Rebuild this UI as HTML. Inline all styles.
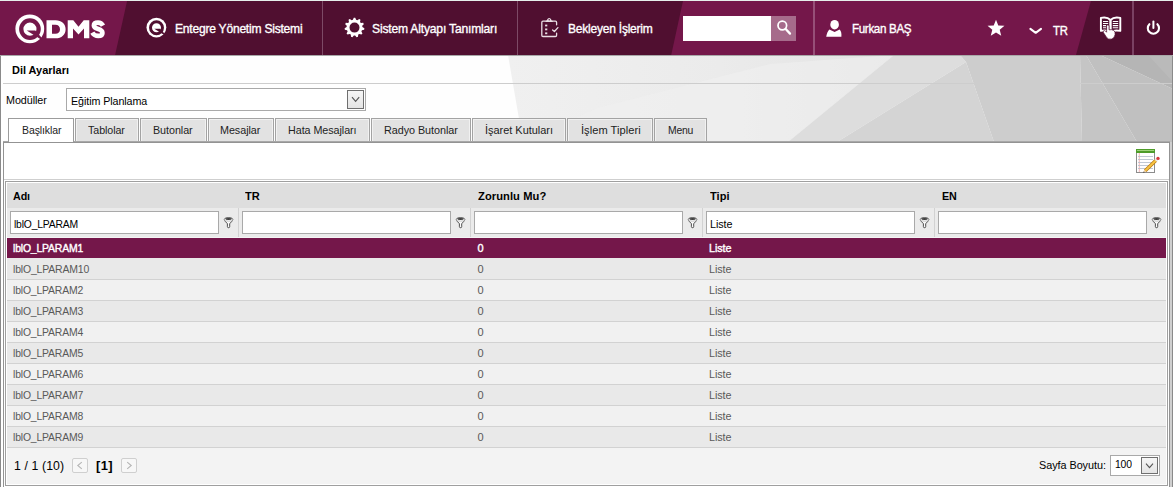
<!DOCTYPE html>
<html lang="tr">
<head>
<meta charset="utf-8">
<title>Dil Ayarları</title>
<style>
html,body{margin:0;padding:0;}
body{width:1173px;height:487px;position:relative;overflow:hidden;background:#fff;font-family:"Liberation Sans",sans-serif;}
.a{position:absolute;}
.t{position:absolute;white-space:nowrap;transform-origin:0 50%;font-family:"Liberation Sans",sans-serif;}
#bg{left:0;top:0;}
.tab{position:absolute;top:118px;height:23px;box-sizing:border-box;border:1px solid #a3a3a3;border-bottom:none;background:#e2e2e2;box-shadow:inset 1px 1px 0 #f1f1f1,inset -1px 0 0 #f1f1f1;}
.tab.on{background:#fff;height:24px;box-shadow:none;border-color:#9b9b9b;}
.inp{position:absolute;top:211px;width:209px;height:23px;box-sizing:border-box;border:1px solid #a9a9a9;background:#fff;}
.row{position:absolute;left:7px;width:1159px;height:21px;box-sizing:border-box;border-bottom:1px solid #d2d2d2;}
.pb{position:absolute;top:458px;width:16px;height:15px;box-sizing:border-box;border:1px solid #cfcfcf;border-radius:2px;background:#f7f7f7;}
</style>
</head>
<body>
<!-- page background with facets -->
<svg id="bg" class="a" width="1173" height="487" viewBox="0 0 1173 487">
  <defs>
    <linearGradient id="g1" x1="508" x2="894" y1="0" y2="0" gradientUnits="userSpaceOnUse">
      <stop offset="0" stop-color="#f0f0f0"/>
      <stop offset="0.55" stop-color="#ebebeb"/>
      <stop offset="1" stop-color="#e3e3e3"/>
    </linearGradient>
  </defs>
  <rect x="0" y="55" width="1173" height="432" fill="#fefefe"/>
  <polygon points="508,55 894,55 788,142 523,142" fill="url(#g1)"/>
  <polygon points="523,142 598,108 770,64 894,55 788,142" fill="#f1f1f1" opacity="0.55"/>
  <polygon points="894,55 960,55 966,62 837,142 788,142" fill="#dddddd"/>
  <polygon points="966,62 994,142 837,142" fill="#d4d4d4"/>
  <polygon points="960,55 1080,55 1082,142 994,142 966,62" fill="#cdcdcd"/>
  <polygon points="1080,55 1086,55 1137,142 1082,142" fill="#c5c5c5"/>
  <polygon points="1086,55 1100,55 1173,89 1173,142 1137,142" fill="#c0c0c0"/>
  <polygon points="1100,55 1173,55 1173,89" fill="#b5b5b5"/>
  <polygon points="1148,55 1173,55 1173,82" fill="#bababa"/>
  <rect x="0" y="142" width="1173" height="345" fill="#cfcfcf"/>
  <rect x="0" y="83" width="1173" height="1" fill="#cdcdcd"/>
  <rect x="0" y="55" width="1" height="432" fill="#8a8a8a"/>
  <rect x="1" y="55" width="2" height="432" fill="#ffffff"/>
  <rect x="1172" y="55" width="1" height="432" fill="#8a8a8a"/>
</svg>

<!-- header -->
<svg class="a" style="left:0;top:0" width="1173" height="56" viewBox="0 0 1173 56">
  <rect x="0" y="0" width="1173" height="55" fill="#74174a"/>
  <polygon points="127.3,0 683.2,0 671.2,55 115.1,55" fill="#500f30"/>
  <polygon points="1091.2,0 1173,0 1173,55 1076,55" fill="#500f30"/>
  <rect x="0" y="0" width="1173" height="1" fill="#e6efeb"/>
  <rect x="0" y="55" width="1173" height="1" fill="#a8a8a8"/>
  <!-- separators -->
  <rect x="322" y="1" width="1" height="54" fill="#7d4a66"/>
  <rect x="517" y="1" width="1" height="54" fill="#7d4a66"/>
  <rect x="813" y="1" width="2" height="54" fill="#974f78"/>
  <rect x="1132" y="1" width="2" height="54" fill="#7a4162"/>
  <!-- big Q logo -->
  <g>
    <circle cx="29.8" cy="28.8" r="14.4" fill="#fff"/>
    <circle cx="29.95" cy="29.1" r="8.7" fill="none" stroke="#74174a" stroke-width="4.3"/>
    <polygon points="26.7,30.6 35.3,30.6 43,39.2 43,40.8" fill="#74174a"/>
  </g>
  <!-- DMS -->
  <path fill="#fff" fill-rule="evenodd" d="M46.5 20.2 H55.6 C61.6 20.2 65.6 23.7 65.6 29.25 C65.6 34.8 61.6 38.3 55.6 38.3 H46.5 Z M52 24.7 V33.8 H55.4 C58.3 33.8 60 32.1 60 29.25 C60 26.4 58.3 24.7 55.4 24.7 Z"/>
  <path fill="#fff" d="M67.7 38.3 V20.2 H73.3 L78.5 26.8 L83.7 20.2 H89.3 V38.3 H84 V28.4 L78.5 34.6 L73 28.4 V38.3 Z"/>
  <path fill="none" stroke="#fff" stroke-width="4.7" d="M103 25.6 C101.8 23.4 100.2 22.55 98 22.55 C95.4 22.55 93.9 23.7 93.9 25.5 C93.9 27.5 95.6 28.3 98.2 29.1 C101 29.9 102.4 31 102.4 33 C102.4 34.9 100.6 35.95 98.2 35.95 C95.6 35.95 93.7 34.9 92.3 32.6"/>
  <!-- small Q -->
  <g transform="translate(156.4 27.6) scale(0.688) translate(-29.8 -28.8)">
    <circle cx="29.8" cy="28.8" r="14.4" fill="#fff"/>
    <circle cx="29.95" cy="29.1" r="8.7" fill="none" stroke="#500f30" stroke-width="4.3"/>
    <polygon points="26.7,30.6 35.3,30.6 43,39.2 43,40.8" fill="#500f30"/>
  </g>
  <!-- gear -->
  <path id="gear" fill="#fff" fill-rule="evenodd" d="M353.77 17.73 L355.23 17.73 L356.11 19.87 L357.32 20.22 L359.22 18.90 L360.46 19.69 L360.04 21.97 L360.86 22.92 L363.18 22.83 L363.79 24.17 L362.20 25.85 L362.38 27.10 L364.38 28.28 L364.17 29.73 L361.93 30.30 L361.40 31.45 L362.44 33.51 L361.48 34.62 L359.29 33.88 L358.23 34.57 L357.99 36.87 L356.58 37.28 L355.13 35.47 L353.87 35.47 L352.42 37.28 L351.01 36.87 L350.77 34.57 L349.71 33.88 L347.52 34.62 L346.56 33.51 L347.60 31.45 L347.07 30.30 L344.83 29.73 L344.62 28.28 L346.62 27.10 L346.80 25.85 L345.21 24.17 L345.82 22.83 L348.14 22.92 L348.96 21.97 L348.54 19.69 L349.78 18.90 L351.68 20.22 L352.89 19.87 Z M349.50 27.60 A5.0 5.0 0 1 0 359.50 27.60 A5.0 5.0 0 1 0 349.50 27.60 Z"/>
  <!-- clipboard -->
  <g fill="none" stroke="#e9dfe4" stroke-width="1.3" stroke-linejoin="round" stroke-linecap="round">
    <path d="M546.5 21.2 H543 Q541.8 21.2 541.8 22.4 V35.3 Q541.8 36.5 543 36.5 H555.4 Q556.6 36.5 556.6 35.3 V33.2 M556.6 24.8 V22.4 Q556.6 21.2 555.4 21.2 H552"/>
    <path d="M552.6 29.9 L554.4 31.5 L557.9 27.6"/>
  </g>
  <path d="M545.6 22.1 H552.8 V21 Q551.6 20.9 551.2 19.6 Q550.7 18.1 549.2 18.1 Q547.7 18.1 547.2 19.6 Q546.8 20.9 545.6 21 Z" fill="#e9dfe4"/>
  <circle cx="549.2" cy="19.7" r="0.7" fill="#500f30"/>
  <g fill="#e9dfe4">
    <rect x="545.1" y="24.6" width="2.2" height="1.8"/>
    <rect x="545.1" y="28.5" width="2.2" height="1.8"/>
    <rect x="545.1" y="32.4" width="2.2" height="1.8"/>
  </g>
  <!-- search -->
  <rect x="683" y="16" width="88" height="25" fill="#fff"/>
  <rect x="771" y="16" width="25" height="25" fill="#a66b8b"/>
  <circle cx="782.3" cy="25.5" r="4.3" fill="none" stroke="#fff" stroke-width="1.7"/>
  <line x1="785.7" y1="29" x2="790" y2="33.6" stroke="#fff" stroke-width="2.3" stroke-linecap="round"/>
  <!-- user -->
  <ellipse cx="834.6" cy="24.7" rx="4.3" ry="4.8" fill="#fff"/>
  <path d="M826.2 36.7 Q827.2 31.5 829.4 29.6 L834.6 32 L839.6 29.6 Q841.8 31.5 841.4 36.7 Z" fill="#fff"/>
  <!-- star -->
  <path id="star" fill="#fff" d="M996.00 19.70 L998.29 25.44 L1004.46 25.85 L999.71 29.81 L1001.23 35.80 L996.00 32.50 L990.77 35.80 L992.29 29.81 L987.54 25.85 L993.71 25.44 Z"/>
  <!-- chevron -->
  <path d="M1030.4 28.9 L1035.7 32.8 L1041 28.9" fill="none" stroke="#fff" stroke-width="2.1" stroke-linecap="round" stroke-linejoin="round"/>
  <!-- book + hand -->
  <g fill="none" stroke="#fff" stroke-width="1.9" stroke-linejoin="round">
    <path d="M1110.5 20 Q1107 16.4 1100.9 17.9 V30.9 Q1106.5 29.8 1110.5 32 Z"/>
    <path d="M1110.5 20 Q1114 16.4 1120.3 17.9 V30.9 Q1114.5 29.8 1110.5 32 Z"/>
  </g>
  <g stroke="#fff" stroke-width="1.05">
    <path d="M1103 21.4 H1108.2 M1103 23.5 H1108.2 M1103 25.6 H1106.2 M1103 27.7 H1106"/>
    <path d="M1112.8 21.4 H1118.2 M1112.8 23.5 H1118.2 M1112.8 25.6 H1118.2 M1112.8 27.7 H1118.2"/>
  </g>
  <path d="M1106.6 26.2 Q1106.6 24.7 1107.8 24.7 Q1109 24.7 1109 26.2 V29.8 Q1111.8 29.2 1113.8 30.5 Q1115.5 31.8 1115.1 34.6 Q1114.5 38.2 1111.5 39.1 Q1108.2 39.6 1106.8 37.7 L1103.2 32.2 Q1102.8 30.6 1104.4 30.6 Q1105.6 30.8 1106.6 32.2 Z" fill="#fff" stroke="#500f30" stroke-width="0.7"/>
  <!-- power -->
  <path d="M1149.4 24.2 A5.6 5.6 0 1 0 1157.4 24.2" fill="none" stroke="#fff" stroke-width="2.1" stroke-linecap="round"/>
  <line x1="1153.4" y1="21.6" x2="1153.4" y2="28" stroke="#fff" stroke-width="2" stroke-linecap="round"/>
</svg>

<!-- module select -->
<div class="a" style="left:66px;top:88px;width:300px;height:23px;box-sizing:border-box;border:1px solid #a9a9a9;background:#fff;"></div>
<div class="a" style="left:347px;top:90px;width:17px;height:19px;box-sizing:border-box;border:1px solid #6f6f6f;background:linear-gradient(#f6f6f6,#e4e4e4);"></div>
<svg class="a" style="left:347px;top:90px" width="17" height="19"><path d="M5 7.2 L8.6 11.4 L12.2 7.2" fill="none" stroke="#555" stroke-width="1.1"/></svg>

<!-- tabs -->
<div class="tab" style="left:75px;width:64px"></div>
<div class="tab" style="left:140px;width:67px"></div>
<div class="tab" style="left:208px;width:66px"></div>
<div class="tab" style="left:275px;width:95px"></div>
<div class="tab" style="left:371px;width:100px"></div>
<div class="tab" style="left:472px;width:94px"></div>
<div class="tab" style="left:567px;width:86px"></div>
<div class="tab" style="left:654px;width:53px"></div>

<!-- panel -->
<div class="a" style="left:3px;top:141px;width:1167px;height:1px;background:#a8a8a8;"></div>
<div class="a" style="left:3px;top:142px;width:1167px;height:350px;box-sizing:border-box;border:1px solid #939393;background:#fff;"></div>
<div class="tab on" style="left:8px;width:66px"></div>

<!-- toolbar line -->
<div class="a" style="left:4px;top:179px;width:1165px;height:1px;background:#cfcfcf"></div>

<!-- edit icon -->
<svg class="a" style="left:1134px;top:146px" width="28" height="30" viewBox="1134 146 28 30">
  <rect x="1136.5" y="149.5" width="18" height="23" fill="#fff" stroke="#8c8c8c" stroke-width="1"/>
  <rect x="1136" y="149" width="19" height="4" fill="#4e9c2a"/>
  <rect x="1137" y="150" width="17" height="1" fill="#9fd27c"/>
  <line x1="1139.3" y1="153" x2="1139.3" y2="172" stroke="#f3a3a3" stroke-width="0.8"/>
  <g stroke="#b9c3cf" stroke-width="0.9">
    <line x1="1138" y1="156.5" x2="1153" y2="156.5"/>
    <line x1="1138" y1="159.5" x2="1153" y2="159.5"/>
    <line x1="1138" y1="162.5" x2="1153" y2="162.5"/>
    <line x1="1138" y1="165.5" x2="1153" y2="165.5"/>
    <line x1="1138" y1="168.5" x2="1153" y2="168.5"/>
  </g>
  <line x1="1145.2" y1="170.8" x2="1156" y2="160.2" stroke="#b9770e" stroke-width="3.4"/>
  <line x1="1145.2" y1="170.8" x2="1156" y2="160.2" stroke="#f6c443" stroke-width="2"/>
  <line x1="1155.6" y1="160.6" x2="1157" y2="159.2" stroke="#e8e8e8" stroke-width="3.2"/>
  <circle cx="1158" cy="158.4" r="1.7" fill="#d9363a"/>
  <path d="M1143.3 172.6 L1144.2 169.8 L1146.2 171.8 Z" fill="#e9c9a0"/>
  <path d="M1143.2 172.8 L1143.7 171.4 L1144.7 172.4 Z" fill="#222"/>
</svg>

<!-- grid -->
<div class="a" style="left:5px;top:181px;width:1163px;height:305px;box-sizing:border-box;border:1px solid #9f9f9f;background:#fff;"></div>
<div class="a" style="left:7px;top:183px;width:1159px;height:25px;background:#dedede;"></div>
<div class="a" style="left:7px;top:208px;width:1159px;height:29px;background:#ebebeb;"></div>
<div class="a" style="left:7px;top:237px;width:1159px;height:1px;background:#f4f4f4;"></div>
<!-- filter column separators -->
<div class="a" style="left:238px;top:208px;width:1px;height:29px;background:#d2d2d2"></div>
<div class="a" style="left:470px;top:208px;width:1px;height:29px;background:#d2d2d2"></div>
<div class="a" style="left:702px;top:208px;width:1px;height:29px;background:#d2d2d2"></div>
<div class="a" style="left:934px;top:208px;width:1px;height:29px;background:#d2d2d2"></div>
<div class="inp" style="left:10px"></div>
<div class="inp" style="left:242px"></div>
<div class="inp" style="left:474px"></div>
<div class="inp" style="left:706px"></div>
<div class="inp" style="left:938px"></div>
<svg class="a" style="left:0;top:208px" width="1173" height="30" viewBox="0 208 1173 30">
  <defs>
    <g id="fil">
      <path d="M0.4 2.3 Q0.9 4.6 3.5 6.3 V9.5 Q3.5 10.5 4.65 10.5 Q5.8 10.5 5.8 9.5 V6.3 Q8.4 4.6 8.9 2.3" fill="#fafafa" stroke="#333" stroke-width="0.85"/>
      <ellipse cx="4.65" cy="2.2" rx="4.25" ry="1.9" fill="#f6f6f6"/><path d="M0.4 2.3 A4.25 1.9 0 0 1 8.9 2.3" fill="none" stroke="#333" stroke-width="0.85"/><path d="M0.6 2.6 A4.1 1.7 0 0 0 8.7 2.6" fill="none" stroke="#9a9a9a" stroke-width="0.5"/>
      <ellipse cx="4.65" cy="1.75" rx="3.2" ry="1.05" fill="#3d3d3d"/>
    </g>
  </defs>
  <use href="#fil" x="223.9" y="217.2"/>
  <use href="#fil" x="455.9" y="217.2"/>
  <use href="#fil" x="687.9" y="217.2"/>
  <use href="#fil" x="919.9" y="217.2"/>
  <use href="#fil" x="1151.9" y="217.2"/>
</svg>

<!-- rows -->
<div class="row" style="top:238px;background:#74174a;border-bottom-color:#e9e9e9"></div>
<div class="row" style="top:259px;background:#e9e9e9"></div>
<div class="row" style="top:280px;background:#f1f1f1"></div>
<div class="row" style="top:301px;background:#e9e9e9"></div>
<div class="row" style="top:322px;background:#f1f1f1"></div>
<div class="row" style="top:343px;background:#e9e9e9"></div>
<div class="row" style="top:364px;background:#f1f1f1"></div>
<div class="row" style="top:385px;background:#e9e9e9"></div>
<div class="row" style="top:406px;background:#f1f1f1"></div>
<div class="row" style="top:427px;background:#e9e9e9"></div>
<!-- footer -->
<div class="a" style="left:7px;top:448px;width:1159px;height:36px;background:#f3f3f3;"></div>
<div class="pb" style="left:72px"></div>
<div class="pb" style="left:121px"></div>
<svg class="a" style="left:72px;top:458px" width="70" height="15">
  <path d="M9.8 4.2 L5.8 7.5 L9.8 10.8" fill="none" stroke="#b5b5b5" stroke-width="1.1"/>
  <path d="M55.2 4.2 L59.2 7.5 L55.2 10.8" fill="none" stroke="#b5b5b5" stroke-width="1.1"/>
</svg>
<!-- page size select -->
<div class="a" style="left:1110px;top:455px;width:50px;height:21px;box-sizing:border-box;border:1px solid #a9a9a9;background:#fff;"></div>
<div class="a" style="left:1141px;top:457px;width:17px;height:17px;box-sizing:border-box;border:1px solid #6f6f6f;background:linear-gradient(#f6f6f6,#e4e4e4);"></div>
<svg class="a" style="left:1141px;top:457px" width="17" height="17"><path d="M5 6.6 L8.5 10.6 L12 6.6" fill="none" stroke="#555" stroke-width="1.1"/></svg>

<span class="t" id="t0" style="left:174.6px;top:19.00px;font-size:13px;line-height:19px;color:#fff;-webkit-text-stroke:0.35px #fff;letter-spacing:-0.244px;transform:scaleX(0.9283);">Entegre Yönetim Sistemi</span>
<span class="t" id="t1" style="left:372.2px;top:19.00px;font-size:13px;line-height:19px;color:#fff;-webkit-text-stroke:0.35px #fff;letter-spacing:-0.213px;transform:scaleX(0.9329);">Sistem Altyapı Tanımları</span>
<span class="t" id="t2" style="left:567.7px;top:19.00px;font-size:13px;line-height:19px;color:#fff;-webkit-text-stroke:0.35px #fff;letter-spacing:-0.245px;transform:scaleX(0.9250);">Bekleyen İşlerim</span>
<span class="t" id="t3" style="left:851.8px;top:19.00px;font-size:13px;line-height:19px;color:#fff;-webkit-text-stroke:0.35px #fff;letter-spacing:-0.402px;transform:scaleX(0.8960);">Furkan BAŞ</span>
<span class="t" id="t4" style="left:1053.3px;top:22.00px;font-size:12px;line-height:18px;color:#fff;-webkit-text-stroke:0.35px #fff;letter-spacing:-0.252px;transform:scaleX(0.9422);">TR</span>
<span class="t" id="t5" style="left:12.4px;top:62.00px;font-size:11px;line-height:16px;color:#000;font-weight:700;letter-spacing:-0.008px;transform:scaleX(0.9968);">Dil Ayarları</span>
<span class="t" id="t6" style="left:5.6px;top:92.00px;font-size:11px;line-height:16px;color:#000;letter-spacing:-0.061px;transform:scaleX(0.9785);">Modüller</span>
<span class="t" id="t7" style="left:70.6px;top:93.00px;font-size:11px;line-height:16px;color:#000;letter-spacing:-0.078px;transform:scaleX(0.9729);">Eğitim Planlama</span>
<span class="t" id="t8" style="left:21.6px;top:122.00px;font-size:11px;line-height:16px;color:#222;letter-spacing:-0.111px;transform:scaleX(0.9565);">Başlıklar</span>
<span class="t" id="t9" style="left:88.4px;top:122.00px;font-size:11px;line-height:16px;color:#222;letter-spacing:-0.077px;transform:scaleX(0.9706);">Tablolar</span>
<span class="t" id="t10" style="left:153.4px;top:122.00px;font-size:11px;line-height:16px;color:#222;letter-spacing:-0.061px;transform:scaleX(0.9779);">Butonlar</span>
<span class="t" id="t11" style="left:220.4px;top:122.00px;font-size:11px;line-height:16px;color:#222;letter-spacing:-0.056px;transform:scaleX(0.9799);">Mesajlar</span>
<span class="t" id="t12" style="left:288px;top:122.00px;font-size:11px;line-height:16px;color:#222;letter-spacing:-0.061px;transform:scaleX(0.9777);">Hata Mesajları</span>
<span class="t" id="t13" style="left:384px;top:122.00px;font-size:11px;line-height:16px;color:#222;letter-spacing:-0.051px;transform:scaleX(0.9825);">Radyo Butonlar</span>
<span class="t" id="t14" style="left:485px;top:122.00px;font-size:11px;line-height:16px;color:#222;letter-spacing:-0.011px;transform:scaleX(0.9954);">İşaret Kutuları</span>
<span class="t" id="t15" style="left:580.5px;top:122.00px;font-size:11px;line-height:16px;color:#222;letter-spacing:0.039px;transform:scaleX(1.0086);">İşlem Tipleri</span>
<span class="t" id="t16" style="left:667.8px;top:122.00px;font-size:11px;line-height:16px;color:#222;letter-spacing:-0.210px;transform:scaleX(0.9441);">Menu</span>
<span class="t" id="t17" style="left:13px;top:188.00px;font-size:11px;line-height:16px;color:#000;font-weight:700;letter-spacing:-0.087px;transform:scaleX(0.9729);">Adı</span>
<span class="t" id="t18" style="left:245.2px;top:188.00px;font-size:11px;line-height:16px;color:#000;font-weight:700;letter-spacing:0.032px;transform:scaleX(1.0044);">TR</span>
<span class="t" id="t19" style="left:477.7px;top:188.00px;font-size:11px;line-height:16px;color:#000;font-weight:700;letter-spacing:0.077px;transform:scaleX(1.0127);">Zorunlu Mu?</span>
<span class="t" id="t20" style="left:709.6px;top:188.00px;font-size:11px;line-height:16px;color:#000;font-weight:700;letter-spacing:0.018px;transform:scaleX(1.0036);">Tipi</span>
<span class="t" id="t21" style="left:941.8px;top:188.00px;font-size:11px;line-height:16px;color:#000;font-weight:700;letter-spacing:-0.103px;transform:scaleX(0.9751);">EN</span>
<span class="t" id="t22" style="left:13.9px;top:216.00px;font-size:11px;line-height:16px;color:#000;letter-spacing:-0.204px;transform:scaleX(0.9415);">lblO_LPARAM</span>
<span class="t" id="t23" style="left:710px;top:216.00px;font-size:11px;line-height:16px;color:#000;letter-spacing:-0.053px;transform:scaleX(0.9789);">Liste</span>
<span class="t" id="t24" style="left:13.4px;top:240.00px;font-size:11px;line-height:16px;color:#fff;-webkit-text-stroke:0.4px #fff;letter-spacing:-0.186px;transform:scaleX(0.9462);">lblO_LPARAM1</span>
<span class="t" id="t25" style="left:477.6px;top:240.00px;font-size:11px;line-height:16px;color:#fff;-webkit-text-stroke:0.4px #fff;">0</span>
<span class="t" id="t26" style="left:709.4px;top:240.00px;font-size:11px;line-height:16px;color:#fff;-webkit-text-stroke:0.4px #fff;letter-spacing:-0.053px;transform:scaleX(0.9789);">Liste</span>
<span class="t" id="t27" style="left:13.4px;top:261.00px;font-size:11px;line-height:16px;color:#595959;letter-spacing:-0.172px;transform:scaleX(0.9500);">lblO_LPARAM10</span>
<span class="t" id="t28" style="left:477.6px;top:261.00px;font-size:11px;line-height:16px;color:#595959;">0</span>
<span class="t" id="t29" style="left:709.4px;top:261.00px;font-size:11px;line-height:16px;color:#595959;letter-spacing:-0.053px;transform:scaleX(0.9789);">Liste</span>
<span class="t" id="t30" style="left:13.4px;top:282.00px;font-size:11px;line-height:16px;color:#595959;letter-spacing:-0.186px;transform:scaleX(0.9462);">lblO_LPARAM2</span>
<span class="t" id="t31" style="left:477.6px;top:282.00px;font-size:11px;line-height:16px;color:#595959;">0</span>
<span class="t" id="t32" style="left:709.4px;top:282.00px;font-size:11px;line-height:16px;color:#595959;letter-spacing:-0.053px;transform:scaleX(0.9789);">Liste</span>
<span class="t" id="t33" style="left:13.4px;top:303.00px;font-size:11px;line-height:16px;color:#595959;letter-spacing:-0.186px;transform:scaleX(0.9462);">lblO_LPARAM3</span>
<span class="t" id="t34" style="left:477.6px;top:303.00px;font-size:11px;line-height:16px;color:#595959;">0</span>
<span class="t" id="t35" style="left:709.4px;top:303.00px;font-size:11px;line-height:16px;color:#595959;letter-spacing:-0.053px;transform:scaleX(0.9789);">Liste</span>
<span class="t" id="t36" style="left:13.4px;top:324.00px;font-size:11px;line-height:16px;color:#595959;letter-spacing:-0.186px;transform:scaleX(0.9462);">lblO_LPARAM4</span>
<span class="t" id="t37" style="left:477.6px;top:324.00px;font-size:11px;line-height:16px;color:#595959;">0</span>
<span class="t" id="t38" style="left:709.4px;top:324.00px;font-size:11px;line-height:16px;color:#595959;letter-spacing:-0.053px;transform:scaleX(0.9789);">Liste</span>
<span class="t" id="t39" style="left:13.4px;top:345.00px;font-size:11px;line-height:16px;color:#595959;letter-spacing:-0.186px;transform:scaleX(0.9462);">lblO_LPARAM5</span>
<span class="t" id="t40" style="left:477.6px;top:345.00px;font-size:11px;line-height:16px;color:#595959;">0</span>
<span class="t" id="t41" style="left:709.4px;top:345.00px;font-size:11px;line-height:16px;color:#595959;letter-spacing:-0.053px;transform:scaleX(0.9789);">Liste</span>
<span class="t" id="t42" style="left:13.4px;top:366.00px;font-size:11px;line-height:16px;color:#595959;letter-spacing:-0.186px;transform:scaleX(0.9462);">lblO_LPARAM6</span>
<span class="t" id="t43" style="left:477.6px;top:366.00px;font-size:11px;line-height:16px;color:#595959;">0</span>
<span class="t" id="t44" style="left:709.4px;top:366.00px;font-size:11px;line-height:16px;color:#595959;letter-spacing:-0.053px;transform:scaleX(0.9789);">Liste</span>
<span class="t" id="t45" style="left:13.4px;top:387.00px;font-size:11px;line-height:16px;color:#595959;letter-spacing:-0.186px;transform:scaleX(0.9462);">lblO_LPARAM7</span>
<span class="t" id="t46" style="left:477.6px;top:387.00px;font-size:11px;line-height:16px;color:#595959;">0</span>
<span class="t" id="t47" style="left:709.4px;top:387.00px;font-size:11px;line-height:16px;color:#595959;letter-spacing:-0.053px;transform:scaleX(0.9789);">Liste</span>
<span class="t" id="t48" style="left:13.4px;top:408.00px;font-size:11px;line-height:16px;color:#595959;letter-spacing:-0.186px;transform:scaleX(0.9462);">lblO_LPARAM8</span>
<span class="t" id="t49" style="left:477.6px;top:408.00px;font-size:11px;line-height:16px;color:#595959;">0</span>
<span class="t" id="t50" style="left:709.4px;top:408.00px;font-size:11px;line-height:16px;color:#595959;letter-spacing:-0.053px;transform:scaleX(0.9789);">Liste</span>
<span class="t" id="t51" style="left:13.4px;top:429.00px;font-size:11px;line-height:16px;color:#595959;letter-spacing:-0.186px;transform:scaleX(0.9462);">lblO_LPARAM9</span>
<span class="t" id="t52" style="left:477.6px;top:429.00px;font-size:11px;line-height:16px;color:#595959;">0</span>
<span class="t" id="t53" style="left:709.4px;top:429.00px;font-size:11px;line-height:16px;color:#595959;letter-spacing:-0.053px;transform:scaleX(0.9789);">Liste</span>
<span class="t" id="t54" style="left:13.6px;top:457.00px;font-size:12px;line-height:18px;color:#000;letter-spacing:0.107px;transform:scaleX(1.0223);">1 / 1 (10)</span>
<span class="t" id="t55" style="left:96.2px;top:457.00px;font-size:12px;line-height:18px;color:#000;font-weight:700;letter-spacing:0.374px;transform:scaleX(1.0764);">[1]</span>
<span class="t" id="t56" style="left:1038.6px;top:457.00px;font-size:11px;line-height:16px;color:#000;letter-spacing:-0.043px;transform:scaleX(0.9848);">Sayfa Boyutu:</span>
<span class="t" id="t57" style="left:1114.6px;top:456.00px;font-size:11px;line-height:16px;color:#000;letter-spacing:-0.187px;transform:scaleX(0.9439);">100</span>
</body>
</html>
